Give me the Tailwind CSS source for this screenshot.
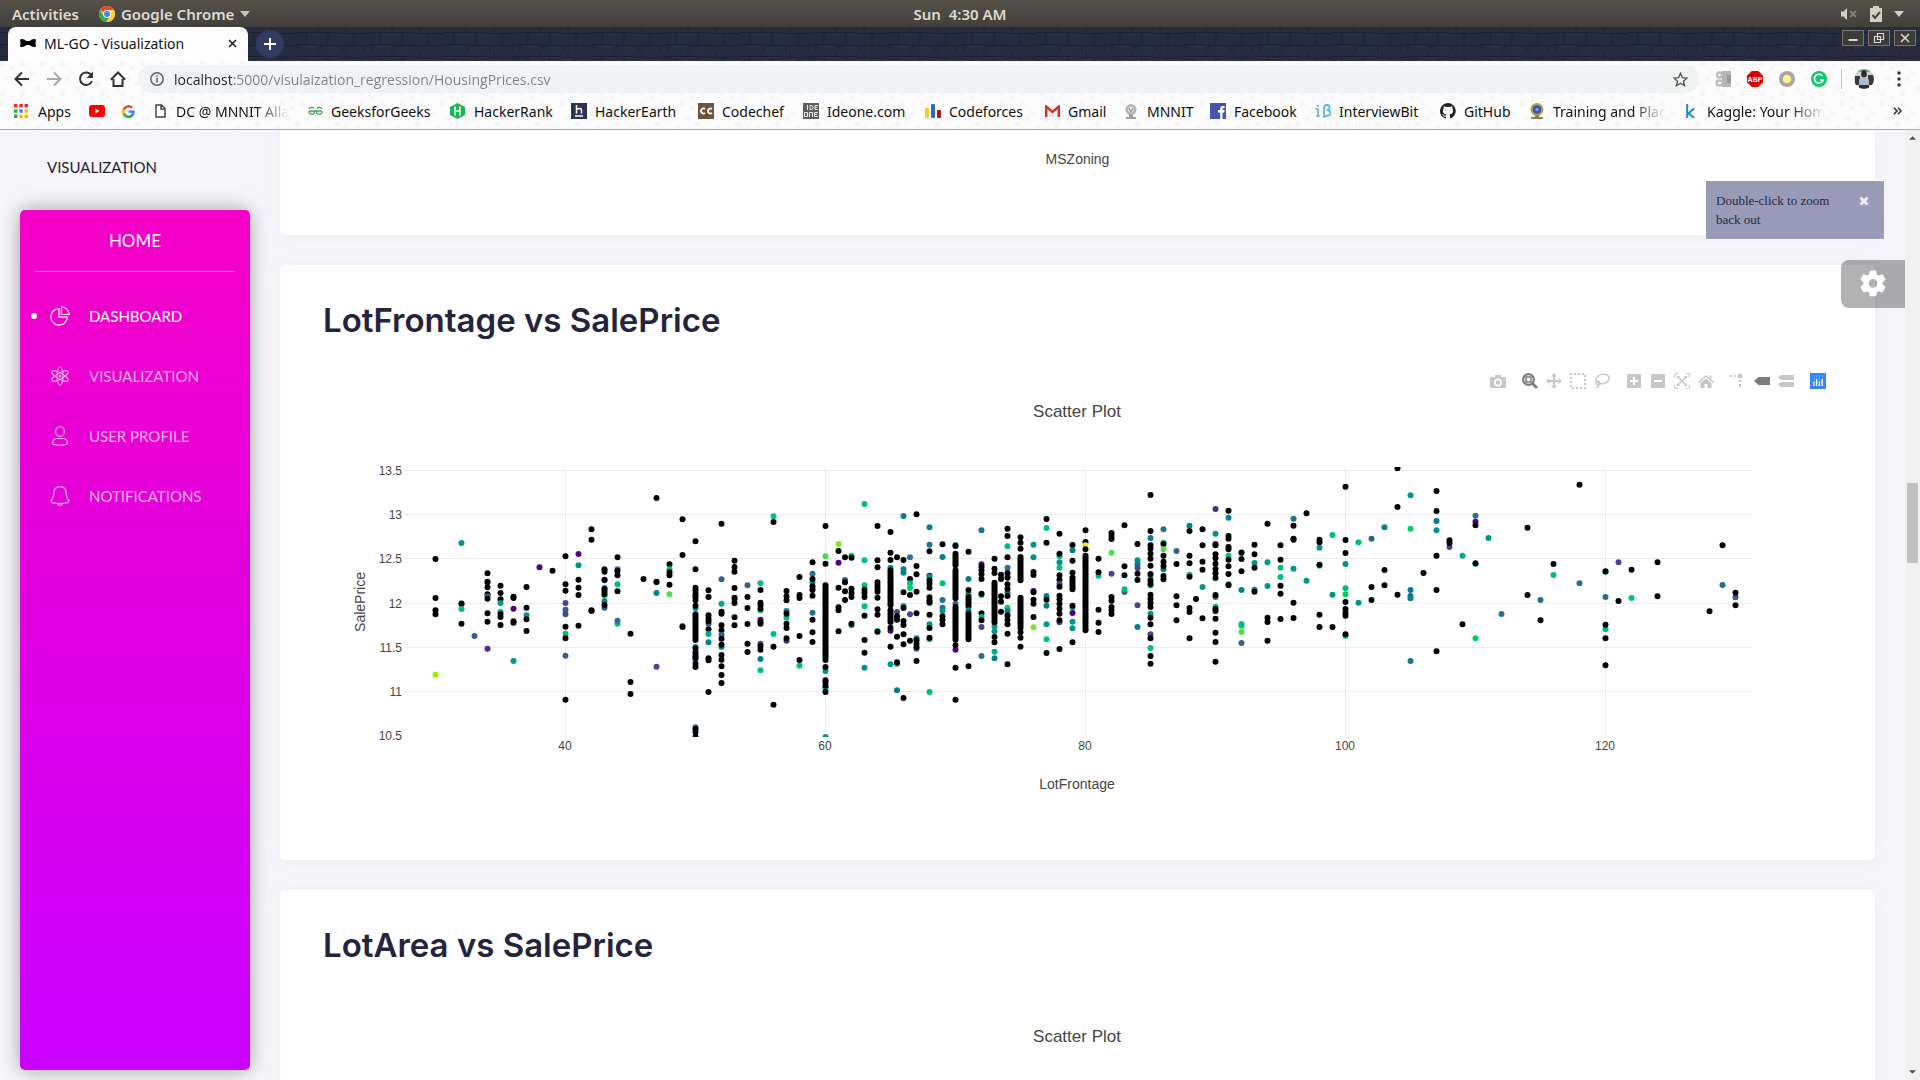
<!DOCTYPE html>
<html lang="en">
<head>
<meta charset="utf-8">
<title>ML-GO - Visualization</title>
<script src="https://cdn.jsdelivr.net/npm/@tailwindcss/browser@4"></script>
</head>
<body class="flex h-screen flex-col overflow-hidden bg-[#f5f5fa] font-['Noto_Sans',sans-serif] text-[#111]">

<!-- Desktop bar -->
<header class="relative flex h-[27px] shrink-0 items-center justify-between bg-linear-to-b from-[#56524a] to-[#403f3a] px-3 text-[15px] font-semibold text-[#dfdbd2]">
  <div class="flex items-center gap-5">
    <button class="h-5 leading-5">Activities</button>
    <button class="flex h-5 items-center gap-[6px] leading-5">
      <svg class="size-4" viewBox="0 0 16 16"><circle cx="8" cy="8" r="8" fill="#fdd43b"/><path d="M8 8 1.1 4A8 8 0 0 1 14.9 4H8z" fill="#ea4335"/><path d="M1.1 4A8 8 0 0 0 7.3 16L11 9.5 4.6 9.8z" fill="#34a853"/><path d="M8 4.400h7a8 8 0 0 1-7.700 11.600L11.200 10z" fill="#fdd43b"/><circle cx="8" cy="8" r="3.9" fill="#fff"/><circle cx="8" cy="8" r="3" fill="#4285f4"/></svg>
      Google Chrome
      <svg class="h-[6px] w-[10px]" viewBox="0 0 10 6"><path d="M0 0h10L5 6z" fill="#c8c4bc"/></svg>
    </button>
  </div>
  <time class="absolute inset-x-0 text-center leading-5 whitespace-pre">Sun  4:30 AM</time>
  <div class="flex items-center gap-3 pr-1">
    <svg class="h-4 w-[18px]" viewBox="0 0 18 16"><path d="M1 5.500h2.500L7 2v12L3.500 10.500H1z" fill="#d3cfc7"/><path d="m10 5 6 6m0-6-6 6" stroke="#85827a" stroke-width="1.800"/></svg>
    <svg class="h-4 w-3" viewBox="0 0 12 16"><path d="M3 0h6v2h3v14H0V2h3z" fill="#d3cfc7"/><path d="m2.500 9 2.500 3 5-6" fill="none" stroke="#45433d" stroke-width="2"/></svg>
    <svg class="h-[6px] w-[10px]" viewBox="0 0 10 6"><path d="M0 0h10L5 6z" fill="#d3cfc7"/></svg>
  </div>
</header>

<!-- Tab strip -->
<div class="relative flex h-[34px] shrink-0 justify-between bg-[#23283a]">
  <svg class="absolute inset-0 size-full" aria-hidden="true">
    <defs><pattern id="bricks" width="74" height="24" patternUnits="userSpaceOnUse">
      <rect width="74" height="24" fill="#262c3f"/><path d="M0 5.500h40l4 1h30M0 17.500h20l5 1h49M10 6v11M32 5v12M58 6v12M2 18v6M24 18v6M46 18v6M68 18v6M22 0v5M50 0v6" fill="none" stroke="#1c2131"/><path d="M13 8h16M36 8h18M6 20h14M28 21h14" stroke="#2c3246"/>
    </pattern></defs>
    <rect width="100%" height="100%" fill="url(#bricks)"/>
  </svg>
  <div class="relative flex">
    <div class="ml-2 flex w-60 items-center rounded-t-lg bg-[#fdfdfd] pr-2 pb-[2px] pl-3 text-[14px]">
      <svg class="h-[10px] w-4" viewBox="0 0 16 10"><path d="M0 1.500Q3 0 6.500 3h3Q13 0 16 1.500q-1 3.500 0 7Q13 10 9.500 7h-3Q3 10 0 8.500q1-3.500 0-7z"/></svg>
      <span class="ml-2 grow whitespace-nowrap">ML-GO - Visualization</span>
      <button class="grid size-4 place-items-center" aria-label="Close tab"><svg class="size-[9px]" viewBox="0 0 9 9"><path d="m1 1 7 7m0-7-7 7" stroke="#222" stroke-width="1.600"/></svg></button>
    </div>
    <button class="mt-[3px] ml-2 grid size-7 place-items-center rounded-full bg-[#333a60]" aria-label="New tab"><svg class="size-3" viewBox="0 0 12 12"><path d="M6 0v12M0 6h12" stroke="#fff" stroke-width="2"/></svg></button>
  </div>
  <div class="relative mt-[3px] mr-1 flex gap-1">
    <button class="grid h-4 w-[22px] place-items-center border border-[#77756e] bg-[#3c3b37]" aria-label="Minimize"><svg class="size-3" viewBox="0 0 12 12"><path d="M1.500 8h9" stroke="#dcd9d2" stroke-width="2"/></svg></button>
    <button class="grid h-4 w-[22px] place-items-center border border-[#77756e] bg-[#3c3b37]" aria-label="Restore"><svg class="size-3" viewBox="0 0 12 12"><path d="M4.500 1.500h6v6h-6zM1.500 4.500h6v6h-6z" fill="none" stroke="#dcd9d2" stroke-width="1.200"/></svg></button>
    <button class="grid h-4 w-[22px] place-items-center border border-[#77756e] bg-[#3c3b37]" aria-label="Close window"><svg class="size-3" viewBox="0 0 12 12"><path d="m2 2 8 8m0-8-8 8" stroke="#dcd9d2" stroke-width="1.600"/></svg></button>
  </div>
</div>

<!-- Address bar and bookmarks -->
<div class="relative shrink-0 border-b border-[#a9a9a9] bg-[#fcfcfc]">
  <svg class="absolute inset-0 size-full" aria-hidden="true">
    <defs><pattern id="weave" width="40" height="40" patternUnits="userSpaceOnUse"><path d="M0 0h5v5H0zM10 5h5v5h-5zM20 0h5v5h-5zM30 10h5v5h-5zM5 15h5v5H5zM15 20h5v5h-5zM25 15h5v5h-5zM35 25h5v5h-5zM0 30h5v5H0zM20 30h5v5h-5zM10 35h5v5h-5z" fill="#f6f6f6"/></pattern></defs>
    <rect width="100%" height="100%" fill="url(#weave)"/>
  </svg>
  <div class="relative flex h-9 items-center pr-[13px] pl-3">
    <nav class="flex gap-3 pr-[10px]">
      <button class="grid size-5 place-items-center" aria-label="Back"><svg class="size-4" viewBox="0 0 16 16"><path d="M15 8H2m6-6.500L1.500 8 8 14.500" fill="none" stroke="#333" stroke-width="2"/></svg></button>
      <button class="grid size-5 place-items-center" aria-label="Forward"><svg class="size-4" viewBox="0 0 16 16"><path d="M1 8h13M8 1.500 14.500 8 8 14.500" fill="none" stroke="#aaa" stroke-width="2"/></svg></button>
      <button class="grid size-5 place-items-center" aria-label="Reload"><svg class="size-4" viewBox="0 0 16 16"><path d="M13.500 4.500A6.200 6.200 0 1 0 14 10" fill="none" stroke="#333" stroke-width="2"/><path d="M15 .5v6.500H8.500z" fill="#333"/></svg></button>
      <button class="grid size-5 place-items-center" aria-label="Home"><svg class="size-4" viewBox="0 0 16 16"><path d="M3.500 8v7h9V8M.8 8.700 8 1.500l7.200 7.200" fill="none" stroke="#333" stroke-width="2"/></svg></button>
    </nav>
    <div class="flex h-7 grow items-center gap-[10px] rounded-full bg-[#eff3f4] pr-[11px] pl-3">
      <svg class="size-[14px]" viewBox="0 0 14 14"><circle cx="7" cy="7" r="6.200" fill="none" stroke="#5f6368" stroke-width="1.500"/><path d="M7 6v4.500M7 3.300v1.500" stroke="#5f6368" stroke-width="1.600"/></svg>
      <input aria-label="Address" class="grow bg-[linear-gradient(90deg,#202124_58px,#7c8185_58px)] bg-clip-text font-['Open_Sans',sans-serif] text-[14px] text-transparent outline-none" value="localhost:5000/visulaization_regression/HousingPrices.csv">
      <button aria-label="Bookmark this page"><svg class="size-[15px]" viewBox="0 0 24 24"><path d="m12 2 3 7 7.500.6-5.700 5 1.700 7.400L12 18l-6.500 4 1.700-7.400-5.700-5L9 9z" fill="none" stroke="#555" stroke-width="2.200"/></svg></button>
    </div>
    <div class="flex items-center pl-4">
      <button class="w-8" aria-label="Google Translate"><svg class="size-4" viewBox="0 0 16 16"><path d="M7 0h9v16H7z" fill="#b5b5b5"/><path d="M12 4h4v8h-4z" fill="#9a9a9a"/><circle cx="4.500" cy="4" r="2.500" fill="#fff" stroke="#bdbdbd" stroke-width="2.500"/><ellipse cx="4.500" cy="12" rx="3" ry="2.500" fill="#fff" stroke="#bdbdbd" stroke-width="2.500"/></svg></button>
      <button class="relative w-8" aria-label="Adblock Plus"><svg class="size-4" viewBox="0 0 16 16"><path d="M4.700 0h6.600L16 4.700v6.600L11.300 16H4.700L0 11.300V4.700z" fill="#d80000"/><text x="8" y="10.500" text-anchor="middle" font-family="Liberation Sans" font-size="7" font-weight="700" fill="#fff">ABP</text></svg></button>
      <button class="w-8" aria-label="Extension"><svg class="size-4" viewBox="0 0 16 16"><circle cx="8" cy="8" r="8" fill="#a6a6a6"/><circle cx="8" cy="8" r="4.300" fill="#f8f58c"/></svg></button>
      <button class="w-[30px]" aria-label="Grammarly"><svg class="size-4" viewBox="0 0 16 16"><circle cx="8" cy="8" r="8" fill="#11c76f"/><path d="M11.500 5A4.500 4.500 0 1 0 12.200 9H9" fill="none" stroke="#fff" stroke-width="1.600"/></svg></button>
      <span class="h-5 w-px bg-[#c4c4c4]"></span>
      <button class="ml-3" aria-label="Profile"><svg class="size-5" viewBox="0 0 20 20"><defs><clipPath id="av"><circle cx="10" cy="10" r="10"/></clipPath></defs><g clip-path="url(#av)"><path d="M0 0h20v20H0z" fill="#cfd3cd"/><path d="M1 7h5v9H1zM14 6h6v10h-6z" fill="#3b3a38"/><path d="M4 0h12v3H4z" fill="#57b7a5"/><ellipse cx="10" cy="5" rx="2.800" ry="4" fill="#3a2a22"/><path d="M5 12q0-4 5-4t5 4v5H5z" fill="#a7bdd6"/><path d="M5 16h10v4H5z" fill="#3b2c28"/></g></svg></button>
      <button class="ml-[17px] w-4" aria-label="Menu"><svg class="h-4 w-4" viewBox="0 0 16 16"><circle cx="8" cy="2" r="1.700" fill="#333"/><circle cx="8" cy="8" r="1.700" fill="#333"/><circle cx="8" cy="14" r="1.700" fill="#333"/></svg></button>
    </div>
  </div>
  <nav class="relative flex h-8 items-center px-[14px] pb-1 text-[14px] whitespace-nowrap">
    <a href="#" class="flex w-[75px] items-center gap-[10px]"><svg class="size-[14px]" viewBox="0 0 14 14"><path d="M0 0h3.500v3.500H0zM5.300 0h3.500v3.500H5.300zM10.500 0H14v3.500h-3.500z" fill="#ea3335"/><path d="M0 5.300h3.500v3.500H0z" fill="#34a853"/><path d="M5.300 5.300h3.500v3.500H5.300z" fill="#4285f4"/><path d="M10.500 5.300H14v3.500h-3.500zM5.300 10.500h3.500V14H5.300zM10.500 10.500H14V14h-3.500z" fill="#fbb905"/><path d="M0 10.500h3.500V14H0z" fill="#34a853"/></svg>Apps</a>
    <a href="#" class="w-[33px]" aria-label="YouTube"><svg class="h-3 w-4" viewBox="0 0 16 12"><rect width="16" height="12" rx="3" fill="#f00"/><path d="m6.300 3.500 4.200 2.500-4.200 2.500z" fill="#fff"/></svg></a>
    <a href="#" class="w-[33px]" aria-label="Google"><svg class="size-[13px]" viewBox="0 0 24 24"><path d="M23.500 12.300c0-.8-.1-1.600-.2-2.300H12v4.500h6.500a5.500 5.500 0 0 1-2.400 3.600v3h3.900c2.200-2.100 3.500-5.200 3.500-8.800z" fill="#4285f4"/><path d="M12 24c3.200 0 6-1.100 8-2.900l-3.900-3a7.200 7.200 0 0 1-10.800-3.800h-4v3.100A12 12 0 0 0 12 24z" fill="#34a853"/><path d="M5.300 14.300a7.200 7.200 0 0 1 0-4.600V6.600h-4a12 12 0 0 0 0 10.800z" fill="#fbbc05"/><path d="M12 4.800c1.800 0 3.400.6 4.600 1.800L20 3.200A12 12 0 0 0 1.300 6.600l4 3.100A7.200 7.200 0 0 1 12 4.800z" fill="#ea4335"/></svg></a>
    <a href="#" class="flex w-[153px] items-center gap-[10px]"><svg class="h-[14px] w-[11px] shrink-0" viewBox="0 0 11 14"><path d="M1 1h5.500L10 4.500V13H1zM6 1v4h4" fill="none" stroke="#444" stroke-width="1.500"/></svg><span class="mask-r-from-70%">DC @ MNNIT Alla</span></a>
    <a href="#" class="flex w-[142px] items-center gap-2"><svg class="h-[10px] w-[15px] shrink-0" viewBox="0 0 15 10"><path d="M1 5h12.500M6 2.500A3 3 0 0 0 1 3M1 5a2.800 2.800 0 1 0 5.500 0M9 2.500A3 3 0 0 1 14 3M14 5a2.800 2.800 0 1 1-5.500 0" fill="none" stroke="#4c9e5f" stroke-width="1.300"/></svg>GeeksforGeeks</a>
    <a href="#" class="flex w-[121px] items-center gap-[9px]"><svg class="h-4 w-[15px] shrink-0" viewBox="0 0 15 16"><path d="M7.500 0 15 4v8l-7.500 4L0 12V4z" fill="#1bb455"/><path d="M5.200 3.500v9M9.800 3.500v9M5.200 8h4.600" stroke="#fff" stroke-width="1.700"/></svg>HackerRank</a>
    <a href="#" class="flex w-[127px] items-center gap-2"><svg class="size-4 shrink-0" viewBox="0 0 16 16"><path d="M0 0h16v16H0z" fill="#2c3454"/><path d="M5.500 2v8.500M5.500 6.500q5-2.500 5 1v3M4 13h8" fill="none" stroke="#fff" stroke-width="1.500"/></svg>HackerEarth</a>
    <a href="#" class="flex w-[105px] items-center gap-2"><svg class="size-4 shrink-0" viewBox="0 0 16 16"><path d="M0 0h16v16H0z" fill="#6f553e"/><path d="M7 6a2.500 2.500 0 1 0 0 4M14 6a2.500 2.500 0 1 0 0 4" fill="none" stroke="#fff" stroke-width="1.700"/></svg>Codechef</a>
    <a href="#" class="flex w-[122px] items-center gap-2"><svg class="size-4 shrink-0" viewBox="0 0 16 16"><path d="M0 0h16v16H0z" fill="#5d5d5d"/><path d="M4.500 2v5M7 2.500v4h1q2 0 2-2t-2-2zM15 2.500h-3v4h3M12 4.500h2M1.500 9.500h3v4h-3zM6.500 14V9.500h3V14M15 9.500h-3.500v4H15M11.500 11.500H14" fill="none" stroke="#eee"/></svg>Ideone.com</a>
    <a href="#" class="flex w-[120px] items-center gap-2"><svg class="size-4 shrink-0" viewBox="0 0 16 16"><rect y="5" width="4" height="10" rx="1" fill="#f5c83a"/><rect x="6" y="1" width="4" height="14" rx="1" fill="#2c6cc4"/><rect x="12" y="7" width="4" height="8" rx="1" fill="#b3121d"/></svg>Codeforces</a>
    <a href="#" class="flex w-[80px] items-center gap-2"><svg class="h-3 w-[15px] shrink-0" viewBox="0 0 15 12"><path d="M1 1h13v11H1z" fill="#eee"/><path d="M1.200 12V1.500L7.500 7l6.300-5.500V12" fill="none" stroke="#d93025" stroke-width="2.400"/></svg>Gmail</a>
    <a href="#" class="flex w-[85px] items-center gap-[10px]"><svg class="h-[15px] w-3 shrink-0" viewBox="0 0 12 15"><circle cx="6" cy="5.500" r="5.500" fill="#b3b3b3"/><circle cx="6" cy="5.500" r="3" fill="#e2e2e2"/><path d="m4 4 2 4 2-4" fill="none" stroke="#888"/><path d="M4 10h4v3H4zM1 13h10v2H1z" fill="#a1a1a1"/></svg>MNNIT</a>
    <a href="#" class="flex w-[105px] items-center gap-2"><svg class="size-4 shrink-0" viewBox="0 0 16 16"><path d="M0 0h16v16H0z" fill="#4756b0"/><path d="M10.200 16V9.500H8V7h2.200V5.500Q10.200 3 13 3h1.500v2.300h-1.200q-.8 0-.8 1V7h2l-.3 2.500h-1.700V16z" fill="#fff"/></svg>Facebook</a>
    <a href="#" class="flex w-[125px] items-center gap-2"><svg class="h-[14px] w-4 shrink-0" viewBox="0 0 16 14"><path d="M0 5h3v7m-2 0h4M3 1v2" fill="none" stroke="#5cbcd2" stroke-width="1.700"/><path d="M9 14V4q0-3 3-3t2.500 2.800Q14 6 11.500 6q4 0 4 3t-6 3" fill="none" stroke="#5cbcd2" stroke-width="1.800"/></svg>InterviewBit</a>
    <a href="#" class="flex w-[89px] items-center gap-2"><svg class="size-4 shrink-0" viewBox="0 0 16 16"><path d="M8 0a8 8 0 0 0-2.500 15.600c.4 0 .5-.2.5-.4v-1.500c-2.200.5-2.700-1-2.700-1-.4-.9-.9-1.100-.9-1.100-.7-.5.1-.5.1-.5.800 0 1.200.8 1.200.8.700 1.200 1.900.9 2.300.7.100-.5.300-.9.500-1.100-1.800-.2-3.600-.9-3.600-4 0-.900.300-1.600.8-2.100 0-.2-.3-1 .1-2.100 0 0 .7-.2 2.200.8a7.600 7.600 0 0 1 4 0c1.500-1 2.200-.8 2.200-.8.4 1.100.2 1.900.1 2.100.500.600.8 1.300.8 2.100 0 3.100-1.900 3.700-3.700 3.900.3.300.6.800.6 1.500v2.200c0 .2.100.5.5.4A8 8 0 0 0 8 0z" fill="#222"/></svg>GitHub</a>
    <a href="#" class="flex w-[157px] items-center gap-2"><svg class="size-4 shrink-0" viewBox="0 0 16 16"><circle cx="8" cy="6.500" r="6.500" fill="#c09a3e"/><circle cx="8" cy="6.500" r="4.300" fill="#2c58c0"/><circle cx="8" cy="6.500" r="1.700" fill="#7fa0e0"/><path d="M2 14h12v2H2zM6 12h4v2H6z" fill="#8b7a57"/></svg><span class="mask-r-from-70%">Training and Plac</span></a>
    <a href="#" class="flex items-center gap-3"><svg class="h-[14px] w-[9px] shrink-0" viewBox="0 0 9 14"><path d="M1.200 0v14M8 4.500l-5.500 5L8.300 14" fill="none" stroke="#1d8fc0" stroke-width="2"/></svg><span class="mask-r-from-70%">Kaggle: Your Hom</span></a>
    <button class="ml-auto pr-1" aria-label="More bookmarks"><svg class="h-2 w-[9px]" viewBox="0 0 9 8"><path d="m1 .8 3 3.200-3 3.200M5 .8 8 4 5 7.200" fill="none" stroke="#333" stroke-width="1.600"/></svg></button>
  </nav>
</div>

<!-- Page -->
<div class="relative flex min-h-0 grow overflow-hidden">
  <aside class="flex w-[280px] shrink-0 flex-col pr-[30px] pb-[10px] pl-5">
    <a href="#" class="flex h-20 items-center pb-[6px] pl-[27px] font-['Lato',sans-serif] text-[15px] text-[#1d1d33]">VISUALIZATION</a>
    <div class="grow rounded-[5px] bg-linear-to-b/srgb from-[#f500c6] to-[#c900ff] px-[15px] text-white shadow-[0_0_20px_rgba(0,0,0,0.35)]">
      <a href="#" class="flex h-[62px] items-center justify-center border-b border-white/50 font-['Lato',sans-serif] text-[17px]">HOME</a>
      <ul class="pt-[14px] font-['Lato',sans-serif] text-[15px]">
        <li><a href="#" class="relative flex h-[60px] items-center gap-[19px] pl-[15px]"><span class="absolute left-[-4px] size-[6px] rounded-full bg-white"></span><svg class="size-5" viewBox="0 0 20 20" fill="none" stroke="#fff" stroke-width="1.200"><path d="M9 2.500a8.300 8.300 0 1 0 8.400 8.600H9z"/><path d="M11.500.8v7.700h7.700A7.900 7.900 0 0 0 11.500.8z"/></svg>DASHBOARD</a></li>
        <li><a href="#" class="flex h-[60px] items-center gap-[19px] pl-[15px] text-white/70"><svg class="size-5" viewBox="0 0 20 20" fill="none" stroke="currentColor"><ellipse cx="10" cy="10" rx="3" ry="9.300"/><ellipse cx="10" cy="10" rx="3" ry="9.300" transform="rotate(60 10 10)"/><ellipse cx="10" cy="10" rx="3" ry="9.300" transform="rotate(120 10 10)"/><circle cx="10" cy="10" r="1" fill="currentColor"/></svg>VISUALIZATION</a></li>
        <li><a href="#" class="flex h-[60px] items-center gap-[19px] pl-[15px] text-white/70"><svg class="size-5" viewBox="0 0 20 20" fill="none" stroke="currentColor" stroke-width="1.200"><ellipse cx="10" cy="5.500" rx="4.400" ry="4.900"/><path d="M2.500 18q0-5.500 4.500-5.500h6q4.500 0 4.500 5.500-7.500 2.500-15 0z"/></svg>USER PROFILE</a></li>
        <li><a href="#" class="flex h-[60px] items-center gap-[19px] pl-[15px] text-white/70"><svg class="size-5" viewBox="0 0 20 20" fill="none" stroke="currentColor" stroke-width="1.200"><path d="M10 .7q6 0 6.300 7 .2 5 2.500 6.300.5 2.500-3 3-5.800 1-11.600 0-3.500-.5-3-3 2.300-1.300 2.500-6.300Q4 .7 10 .7zM7.500 17.500q.5 1.900 2.500 1.900t2.500-1.900"/></svg>NOTIFICATIONS</a></li>
      </ul>
    </div>
  </aside>

  <main class="mr-[30px] flex min-w-0 grow flex-col gap-[30px]">
    <section class="flex h-[105px] shrink-0 justify-center rounded-b-[5px] bg-white pt-[19px] font-['Liberation_Sans',sans-serif] text-[14px] text-[#444] shadow-[0_1px_20px_rgba(0,0,0,0.04)]">MSZoning</section>

    <section class="shrink-0 rounded-[5px] bg-white px-[43px] pt-8 pb-[43px] shadow-[0_1px_20px_rgba(0,0,0,0.04)]">
      <h2 class="mb-6 font-['Inter',sans-serif] text-[33px] leading-[46px] font-semibold text-[#24243e]">LotFrontage vs SalePrice</h2>
      <div class="relative">
        <svg class="block w-full" viewBox="0 0 1509 450" font-family="Liberation Sans, Arial, sans-serif" fill="#444">
          <defs><clipPath id="plot"><path d="M81 100h1348v270H81z"/></clipPath></defs>
          <text x="754" y="50" text-anchor="middle" font-size="17">Scatter Plot</text>
          <text x="754" y="422" text-anchor="middle" font-size="14">LotFrontage</text>
          <text transform="translate(42 235) rotate(-90)" text-anchor="middle" font-size="14">SalePrice</text>
          <g id="grid" stroke="#ececec"></g>
          <g id="ticks" font-size="12"></g>
          <g id="dots" clip-path="url(#plot)"></g>
        </svg>
        <div class="absolute top-[2px] right-[2px] flex gap-2 text-[#c7c7c7]">
          <div class="flex"><button class="grid size-6 place-items-center" aria-label="Download plot"><svg class="size-4" viewBox="0 0 16 16" fill="currentColor"><path fill-rule="evenodd" d="M5 2h6v2h4q1 0 1 1v9q0 1-1 1H1q-1 0-1-1V5q0-1 1-1h4zm3 3.500a4 4 0 1 0 0 8 4 4 0 0 0 0-8z"/><circle cx="8" cy="9.500" r="2.300"/></svg></button></div>
          <div class="flex">
            <button class="grid size-6 place-items-center text-[#7c7c7c]" aria-label="Zoom"><svg class="size-4" viewBox="0 0 16 16" fill="none" stroke="currentColor"><circle cx="6.500" cy="6.500" r="5.400" stroke-width="2.200"/><path d="m10.500 10.500 4.500 4.500" stroke-width="2.800"/><path d="M4 4h5v5H4z" stroke-width="1.500"/></svg></button>
            <button class="grid size-6 place-items-center" aria-label="Pan"><svg class="size-4" viewBox="0 0 16 16" fill="currentColor"><path d="m8 0 3 3.500H9V7h3.500V5L16 8l-3.500 3V9H9v3.500h2L8 16l-3-3.500h2V9H3.500v2L0 8l3.500-3v2H7V3.500H5z"/></svg></button>
            <button class="grid size-6 place-items-center" aria-label="Box select"><svg class="size-4" viewBox="0 0 16 16"><path d="M1 1h14v14H1z" fill="none" stroke="currentColor" stroke-width="2" stroke-dasharray="2 2" stroke-dashoffset="1"/></svg></button>
            <button class="grid size-6 place-items-center" aria-label="Lasso select"><svg class="size-4" viewBox="0 0 16 16" fill="none" stroke="currentColor" stroke-width="1.400"><ellipse cx="8.500" cy="6" rx="6.800" ry="4.700" transform="rotate(-12 8.500 6)"/><circle cx="4" cy="10" r="1.900"/><path d="M4.500 12q.5 2-2 3"/></svg></button>
          </div>
          <div class="flex">
            <button class="grid size-6 place-items-center" aria-label="Zoom in"><svg class="size-[14px]" viewBox="0 0 14 14"><path d="M0 0h14v14H0z" fill="currentColor"/><path d="M7 3v8M3 7h8" stroke="#fff" stroke-width="2"/></svg></button>
            <button class="grid size-6 place-items-center" aria-label="Zoom out"><svg class="size-[14px]" viewBox="0 0 14 14"><path d="M0 0h14v14H0z" fill="currentColor"/><path d="M3 7h8" stroke="#fff" stroke-width="2"/></svg></button>
            <button class="grid size-6 place-items-center" aria-label="Autoscale"><svg class="size-4" viewBox="0 0 16 16" fill="none" stroke="currentColor"><path d="M.7 4.500V.7h3.800M11.500.7h3.800v3.800M15.300 11.500v3.800h-3.800M4.500 15.300H.7v-3.800"/><path d="m4 4 8 8m0-8-8 8" stroke-width="1.500"/><path d="M3 6V3h3zM10 3h3v3zM13 10v3h-3zM6 13H3v-3z" fill="currentColor" stroke="none"/></svg></button>
            <button class="grid size-6 place-items-center" aria-label="Reset axes"><svg class="h-[14px] w-4" viewBox="0 0 16 14" fill="currentColor"><path d="M8 1 16 8l-1 1-7-6-7 6-1-1zM11.500 1.500h2V5l-2-1.500zM2.500 9 8 4.500 13.500 9v5h-4v-4h-3v4h-4z"/></svg></button>
          </div>
          <div class="flex">
            <button class="grid size-6 place-items-center" aria-label="Toggle spike lines"><svg class="size-4" viewBox="0 0 16 16" fill="currentColor"><path d="M0 2h2v2H0zM4 2h2v2H4zM9 7h2v2H9zM9 11h2v3H9z"/><circle cx="10" cy="3" r="2.500"/></svg></button>
            <button class="grid size-6 place-items-center text-[#7c7c7c]" aria-label="Show closest data on hover"><svg class="size-4" viewBox="0 0 16 16" fill="currentColor"><path d="M0 8 4.500 4H16v8H4.500z"/></svg></button>
            <button class="grid size-6 place-items-center" aria-label="Compare data on hover"><svg class="size-4" viewBox="0 0 16 16" fill="currentColor"><path d="m0 4.500 3-2.500h13v5H3zM0 11.500 3 9h13v5H3z"/></svg></button>
          </div>
          <div class="flex"><a href="#" class="grid size-6 place-items-center" aria-label="Produced with Plotly"><svg class="size-4" viewBox="0 0 16 16"><path d="M0 0h16v16H0z" fill="#3b82fb"/><path d="M3.800 8.500V13M6.600 6v7M9.400 8.500V13M12.200 6v7" stroke="#fff" stroke-width="1.400"/><path d="M3 3h1.200M6 3h1.200M9 3h1.200M12 3h1.200M3 5.500h1.200M9 5.500h1.200" stroke="#25f0f0" stroke-width="1.200"/></svg></a></div>
        </div>
      </div>
    </section>

    <section class="shrink-0 rounded-[5px] bg-white px-[43px] pt-8 pb-[43px] shadow-[0_1px_20px_rgba(0,0,0,0.04)]">
      <h2 class="mb-6 font-['Inter',sans-serif] text-[33px] leading-[46px] font-semibold text-[#24243e]">LotArea vs SalePrice</h2>
      <svg class="block w-full" viewBox="0 0 1509 450" font-family="Liberation Sans, Arial, sans-serif" fill="#444">
        <text x="754" y="50" text-anchor="middle" font-size="17">Scatter Plot</text>
      </svg>
    </section>
  </main>

  <!-- Page scrollbar -->
  <div class="relative w-[15px] shrink-0 bg-[#f1f1f1]">
    <svg class="absolute top-[6px] left-1 h-1 w-[7px]" viewBox="0 0 8 4"><path d="M0 4h8L4 0z" fill="#505050"/></svg>
    <div class="absolute top-[353px] left-[2px] h-20 w-[11px] bg-[#c1c1c1]"></div>
    <svg class="absolute bottom-[6px] left-1 h-1 w-[7px]" viewBox="0 0 8 4"><path d="M0 0h8L4 4z" fill="#505050"/></svg>
  </div>

  <div role="status" class="absolute top-[50px] right-[35px] flex h-[60px] w-[180px] justify-between border border-white bg-[#999bb8] pt-[10px] pr-[15px] pl-[10px] font-['Liberation_Serif',serif] text-[13px] leading-[19px] text-[#222a42]">
    <p class="w-[125px]">Double-click to zoom back out</p>
    <button class="h-[19px]" aria-label="Dismiss"><svg class="size-[10px]" viewBox="0 0 10 10"><path d="m1.500 1.500 7 7m0-7-7 7" stroke="#eeeef4" stroke-width="3"/></svg></button>
  </div>
  <button class="absolute top-[130px] right-[15px] grid h-12 w-16 place-items-center rounded-l-lg bg-black/30" aria-label="Settings">
    <svg class="size-7" viewBox="0 0 24 24"><path fill="#fff" fill-rule="evenodd" stroke="#fff" stroke-linejoin="round" d="M9.700 1h4.600l.6 3.200 1.900 1.100 3.100-1.100 2.300 4-2.500 2.100v2.400l2.500 2.100-2.300 4-3.100-1.100-1.900 1.100-.6 3.200H9.700l-.6-3.200-1.900-1.100-3.100 1.100-2.300-4 2.500-2.100v-2.400L1.800 8.200l2.300-4 3.100 1.100 1.900-1.100zM12 7.300a4.200 4.200 0 1 0 0 8.400A4.200 4.200 0 0 0 12 7.300z"/></svg>
  </button>
</div>

<script>
const NS = 'http://www.w3.org/2000/svg';
const add = (id, tag, attrs, text) => {
  const el = document.createElementNS(NS, tag);
  for (const k in attrs) el.setAttribute(k, attrs[k]);
  if (text) el.textContent = text;
  document.getElementById(id).append(el);
};
// Marker colours; entries without a letter are black.
const colors = {P:'#55007f',V:'#4f2a88',I:'#46478f',B:'#35608e',S:'#23728e',T:'#00828c',E:'#00968c',G:'#00aa84',M:'#00bf7a',N:'#00d062',L:'#4ce048',Y:'#7cea2c',W:'#98ee00',Z:'#f5ea00'};
// LotFrontage -> marker heights in thirds of a pixel; "a-b" is a run of overlapping markers.
const data = {
30:'326 443 480 492 W673',32:'E278 B459 461 M476 520',33:'B557',34:'369 B397 394 411 432 B438 445 489 514 V595',
35:'406 428 447 E458 M484 491 500 524',36:'439 443 P475 513 517 E632',37:'410 472 E495 507 542',38:'P351',39:'361',
40:'318 402 421 I458 B478 I492 529 M550 564 B616 748',41:'P311 E345 388 412 434 526',42:'237 268 480 482',
43:'357 364 B390 388 T413 417 424 L437 432 T453 B472 464',44:'321 B357 362 375 M402 423 M520 S511',45:'550 695 731',
46:'386',47:'143 I396 394 T428 I649',48:'342 M357 366 375 403 L432',49:'207 314 B527 530',
50:'273 357 B434 412 420 430 440 450 E474 466 492-575 E590 B628 S618 594 606 614 622 640 650 B831 836 846 860',
51:'420 440 495 505 B520 513 537 G551 T576 624 630 725',52:'220 B387 G460 484 490 525 540 B553 565 E590 583 614 628 648 674 698',
53:'331 350 364 413 B448 442 458 501 525',54:'B405 440 473 521 580 605',
55:'M399 419 457 465 M480 475 P508 514 520 I580 587 598 T626 M660',56:'M198 215 M551 589 763',57:'422 438 450 S482 M502 490 520 533 V571 564',
58:'380 434 443 557 629 M646',59:'336 S370 E396 386 M416 408 419 436 S487 508 546 575',
60:'227 L318 340 405-635 E662 650 B710 M715 690 696 706 725 E860',61:'Y281 302 P337 412 471 480 543',61.5:'321 B389 396 423 449',
62:'M316 322 415 428 440 T524 520',63:'M161 M330 M405 418 428 440 M468 496 569 607 E652',64:'227 330 351 396 406 415 424 442 477 493 M542 544',
65:'245 307 329 E352 360-465 480-520 P541 532 589 E642',65.5:'321 I485 498 508 559 T640 636 T720',66:'T197 329 T357 T367 426 E467 473 512 524 552 582 743',
66.5:'S321 386 M399 N413 434 I492 571',67:'192 347 372 424 489 T564 570 580 B595 590 632',
68:'T231 S283 303 P376 E380 390 400 412 441 M459 450 456 493 E522 533 M567 562 M725',69:'282 T320 M399 S449 S472 E481 498 508 522',
70:'E284 287 310-345 360-450 B460 470-570 P598 585 652 748',71:'304 T386 G430 419 440-472 T480 490-570 648',
72:'S240 P342 350 360 372 386 M434 430 489 M500 510 I530 S617',73:'325 355 368 E528 397-522 E543 560 576 G604 T624',
73.5:'373 386 438 454 484',74:'235 257 M288 321 S352 M378 368 382 B426 402 415 437 N472 T482 495 508 522 550 642',
75:'261 277 295 320-395 442-535 546 562 589',76:'E283 E321 365 374 P422 426 448 460 500 Y531',77:'206 M233 277 T437 448 T466 E522 M567 608',
78:'250 M318 310 E336 M352 375 388 I400 409 436 447 460 475 490 I516 510 596',79:'284 T300 331 367 382-418 M472 466 P488 E514 E534 576',
80:'240 275 Z285 297 316-545',81:'325 M376 366 478 517 545',82:'248 257 266 L307 I370 440 451 470 480 491',83:'225 348 375 B425 M417',
84:'281 E330 T342 I353 370 389 I465 T530',85:'134 242 T263 285 295 310 325 346 M378 371 T405 390 400 433 445 458 470 E490 502 522 I552 564 M593 617 640',
86:'S237 M277 281 L297 316 334 T357 347 377 387',87:'B302 341 438 465 510',88:'T226 242 316 339 M373 379 473 485 564',88.5:'446',
89:'237 285 334 358 E410 504',90:'V176 E250 P281 285 312 324 340 356 369 383 B440 434 M469 476 482 505 547 575 634',
91:'181 T202 257 265 290 297 M316 328 348 371 T402 405',92:'M306 307 326 363 T419 N526 M521 L545 B578',93:'283 312 E338 352 T418 424',
94:'220 E336 E407 502 515 571',95:'285 328 M352 M380 406 430 506',96:'S205 226 265 268 E355 457 503',97:'189 E391',
98:'268 276 E292 M346 343 493 530',99:'M254 E433 530',100:'109 269 308 E341 M414 N432 455 476 488 496 N557 552',101:'M276 E457',
102:'B265 410 449',103:'T231 359 405',104:'54 170 433',105:'E135 N235 T419 B437 T444 S632',106:'368',107:'122 182 T212 E240 316 419 603',
108:'I290 270 278',109:'G316 522',110:'S196 P214 225 M341 339 N564',111:'E263',112:'S491',114:'232 434',115:'S449 510',116:'341 M374',
118:'103 S399',120:'M365 363 S440 M537 523 564 645',121:'I336 452',122:'358 M443',124:'336 438',128:'483',129:'285 S404',130:'B441 427 465'
};
const px = v => 242 + (v - 40) * 13, py = v => 83 + v / 3;
for (let v = 27, i = 0; v >= 21; v--, i++) {
  const y = Math.round(103 + i * 44.2);
  if (v > 21) add('grid', 'path', {d: `M81 ${y + .5}h1348`});
  add('ticks', 'text', {x: 79, y: y + 5, 'text-anchor': 'end'}, String(v / 2));
}
for (const v of [40, 60, 80, 100, 120]) {
  add('grid', 'path', {d: `M${px(v) + .5} 100v270`});
  add('ticks', 'text', {x: px(v), y: 383, 'text-anchor': 'middle'}, String(v));
}
for (const v of Object.keys(data).sort((a, b) => a - b)) {
  for (const t of data[v].split(' ')) {
    const fill = colors[t[0]] || '#000';
    const [a, b] = t.replace(/^[A-Z]/, '').split('-').map(Number);
    for (let y = a; y <= (b || a); y += 7) add('dots', 'circle', {cx: px(v) + .5, cy: py(y) + .3, r: 3, fill});
  }
}
</script>
</body>
</html>
